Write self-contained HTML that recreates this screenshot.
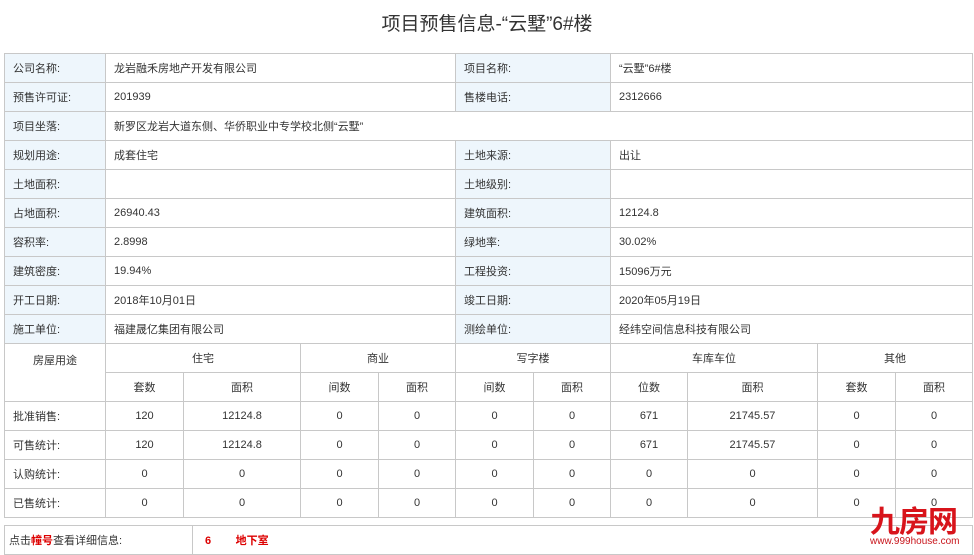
<!DOCTYPE html><html><head><meta charset="utf-8"><style>
body{margin:0;width:974px;height:551px;background:#fff;font-family:"Liberation Sans","Noto Sans CJK SC",sans-serif;font-size:11px;color:#333;position:relative;overflow:hidden}
h1{position:absolute;top:10px;left:0;width:974px;text-align:center;margin:0;font-size:19px;font-weight:normal;color:#333;line-height:30px}
table{position:absolute;border-collapse:collapse;table-layout:fixed}
td{border:1px solid #c8c8c8;padding:0 0 0 8px;height:28px;white-space:nowrap}
.l{background:#eef6fc}
.b td{text-align:center;padding:0}
.b td.lt{text-align:left;padding-left:8px}
.r{color:#d00;font-weight:bold}
</style></head><body>
<h1>项目预售信息-“云墅”6#楼</h1>
<table style="left:4px;top:53px;width:968px">
<colgroup><col style="width:101px"><col style="width:350px"><col style="width:155px"><col style="width:362px"></colgroup>
<tr><td class="l">公司名称:</td><td>龙岩融禾房地产开发有限公司</td><td class="l">项目名称:</td><td>“云墅”6#楼</td></tr>
<tr><td class="l">预售许可证:</td><td>201939</td><td class="l">售楼电话:</td><td>2312666</td></tr>
<tr><td class="l">项目坐落:</td><td colspan="3">新罗区龙岩大道东侧、华侨职业中专学校北侧“云墅”</td></tr>
<tr><td class="l">规划用途:</td><td>成套住宅</td><td class="l">土地来源:</td><td>出让</td></tr>
<tr><td class="l">土地面积:</td><td></td><td class="l">土地级别:</td><td></td></tr>
<tr><td class="l">占地面积:</td><td>26940.43</td><td class="l">建筑面积:</td><td>12124.8</td></tr>
<tr><td class="l">容积率:</td><td>2.8998</td><td class="l">绿地率:</td><td>30.02%</td></tr>
<tr><td class="l">建筑密度:</td><td>19.94%</td><td class="l">工程投资:</td><td>15096万元</td></tr>
<tr><td class="l">开工日期:</td><td>2018年10月01日</td><td class="l">竣工日期:</td><td>2020年05月19日</td></tr>
<tr><td class="l">施工单位:</td><td>福建晟亿集团有限公司</td><td class="l">测绘单位:</td><td>经纬空间信息科技有限公司</td></tr>
</table>
<table class="b" style="left:4px;top:343px;width:968px">
<colgroup><col style="width:101px"><col style="width:78px"><col style="width:117px"><col style="width:78px"><col style="width:77px"><col style="width:78px"><col style="width:77px"><col style="width:77px"><col style="width:130px"><col style="width:78px"><col style="width:77px"></colgroup>
<tr><td rowspan="2" style="vertical-align:top;padding-top:8px">房屋用途</td><td colspan="2">住宅</td><td colspan="2">商业</td><td colspan="2">写字楼</td><td colspan="2">车库车位</td><td colspan="2">其他</td></tr>
<tr><td>套数</td><td>面积</td><td>间数</td><td>面积</td><td>间数</td><td>面积</td><td>位数</td><td>面积</td><td>套数</td><td>面积</td></tr>
<tr><td class="lt">批准销售:</td><td>120</td><td>12124.8</td><td>0</td><td>0</td><td>0</td><td>0</td><td>671</td><td>21745.57</td><td>0</td><td>0</td></tr>
<tr><td class="lt">可售统计:</td><td>120</td><td>12124.8</td><td>0</td><td>0</td><td>0</td><td>0</td><td>671</td><td>21745.57</td><td>0</td><td>0</td></tr>
<tr><td class="lt">认购统计:</td><td>0</td><td>0</td><td>0</td><td>0</td><td>0</td><td>0</td><td>0</td><td>0</td><td>0</td><td>0</td></tr>
<tr><td class="lt">已售统计:</td><td>0</td><td>0</td><td>0</td><td>0</td><td>0</td><td>0</td><td>0</td><td>0</td><td>0</td><td>0</td></tr>
</table>
<table style="left:4px;top:525px;width:968px">
<colgroup><col style="width:188px"><col style="width:780px"></colgroup>
<tr><td style="height:25px;padding-left:4px">点击<span class="r">幢号</span>查看详细信息:</td><td style="padding-left:12px"><span class="r">6</span>&nbsp;&nbsp;&nbsp;&nbsp;&nbsp;&nbsp;&nbsp;&nbsp;<span class="r">地下室</span></td></tr>
</table>
<div style="position:absolute;left:870px;top:503px;color:#d8141b;font-size:30px;line-height:32px;font-weight:bold;letter-spacing:-1px;font-family:'Noto Sans CJK SC',sans-serif">九房网</div>
<div style="position:absolute;left:870px;top:536px;color:#c8141b;font-size:10px;line-height:12px">www.999house.com</div>
</body></html>
